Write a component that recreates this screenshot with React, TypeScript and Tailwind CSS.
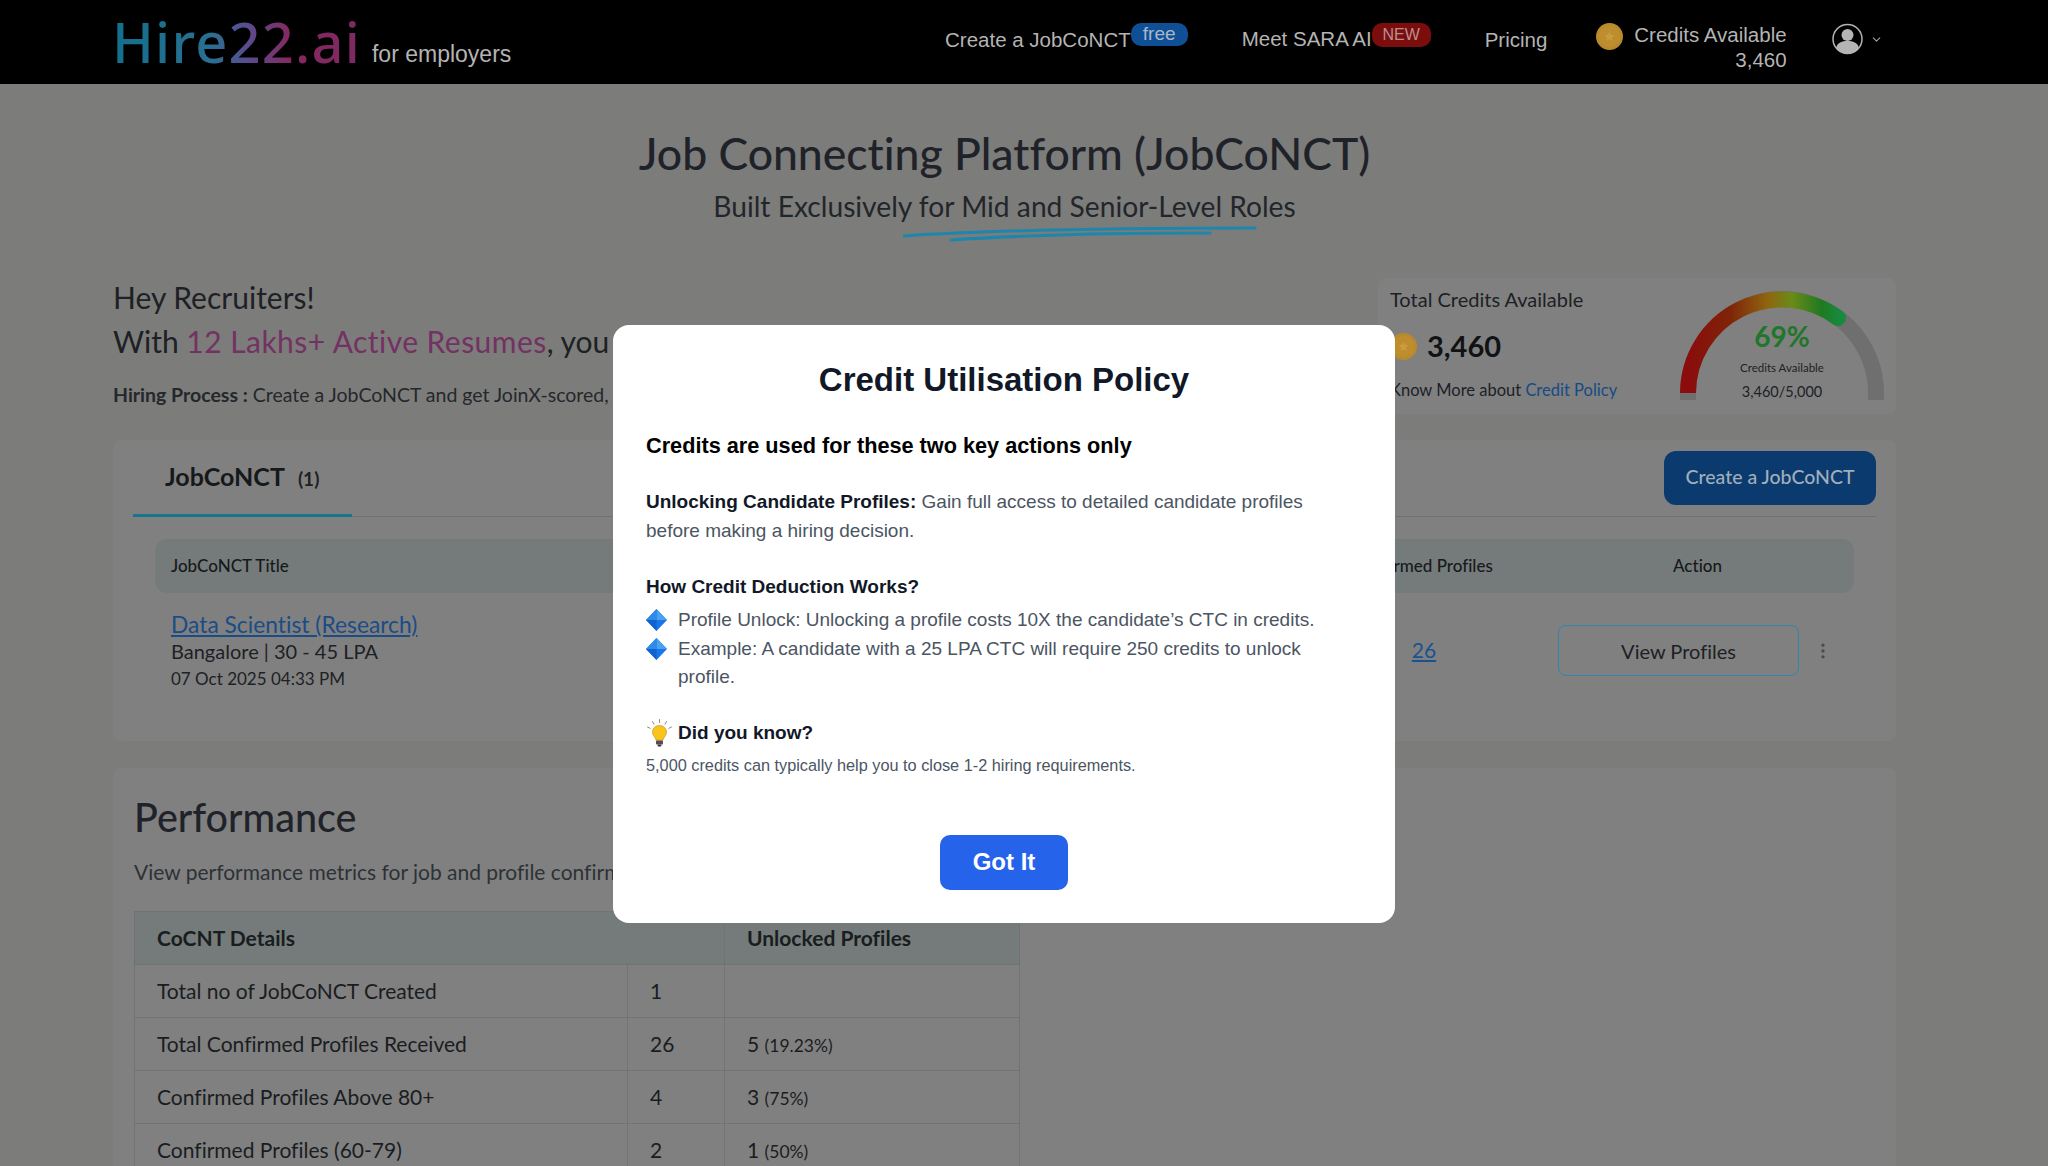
import { ChevronDown, EllipsisVertical } from 'lucide-react'

const perfRows = [
  { label: 'Total no of JobCoNCT Created', count: '1', unlocked: '', pct: '' },
  { label: 'Total Confirmed Profiles Received', count: '26', unlocked: '5', pct: '(19.23%)' },
  { label: 'Confirmed Profiles Above 80+', count: '4', unlocked: '3', pct: '(75%)' },
  { label: 'Confirmed Profiles (60-79)', count: '2', unlocked: '1', pct: '(50%)' },
]

function Coin({ size }: { size: number }) {
  return (
    <svg width={size} height={size} viewBox="0 0 24 24" className="shrink-0">
      <circle cx="12" cy="12" r="12" fill="#b98a2c" />
      <circle cx="12" cy="12" r="9.5" fill="#bd8d2e" />
      <path d="M12 7.500l1.300 2.900 3.200.4-2.400 2.100.7 3.200-2.800-1.600-2.800 1.600.7-3.200-2.400-2.100 3.200-.4z" fill="#c99c3e" />
    </svg>
  )
}

function Diamond() {
  return (
    <svg width="21" height="22" viewBox="0 0 21 22" className="shrink-0">
      <path d="M10.5 0 L21 11 L10.5 22 L0 11 Z" fill="#1976e8" />
      <path d="M10.5 0 L21 11 L10.5 11 Z" fill="#4aa3f0" />
      <path d="M10.5 0 L0 11 L10.5 11 Z" fill="#2f8ae8" />
      <path d="M10.5 22 L0 11 L10.5 11 Z" fill="#0f62d0" />
    </svg>
  )
}

function Bulb() {
  return (
    <svg width="27" height="28" viewBox="0 0 27 28" className="shrink-0">
      <g stroke="#8a8a8a" strokeWidth="1" strokeLinecap="round">
        <path d="M13.5 0.5v3M6.5 2.5l1.5 2.6M20.5 2.5l-1.500 2.600M1.500 8l2.600 1.300M25.500 8l-2.600 1.300" />
      </g>
      <path d="M13.500 6.500c-4 0-7 2.900-7 6.600 0 2.700 1.700 4.300 2.700 5.900.500.800.800 1.500.800 2.200h7c0-.700.300-1.400.800-2.200 1-1.600 2.700-3.200 2.700-5.900 0-3.700-3-6.600-7-6.600z" fill="#f8c51c" stroke="#b98a10" strokeWidth="0.6" />
      <rect x="10" y="21.500" width="7" height="4" rx="0.800" fill="#5a4a55" />
      <rect x="11.500" y="25.500" width="4" height="2" rx="1" fill="#3c3238" />
    </svg>
  )
}

function Gauge() {
  return (
    <svg width="204" height="109" viewBox="0 0 204 109" className="block">
      <defs>
        <linearGradient id="gaugeFill" gradientUnits="userSpaceOnUse" x1="8" y1="0" x2="160" y2="0">
          <stop offset="0" stopColor="#8a0c0c" />
          <stop offset="0.28" stopColor="#7f2408" />
          <stop offset="0.52" stopColor="#8f6410" />
          <stop offset="0.68" stopColor="#6c8a18" />
          <stop offset="0.88" stopColor="#1f7a20" />
          <stop offset="1" stopColor="#178a3e" />
        </linearGradient>
      </defs>
      <path d="M8 109 V102 A94 94 0 0 1 196 102 V109" fill="none" stroke="#6f6f6f" strokeWidth="16" />
      <path d="M8 101 V102 A94 94 0 0 1 158 27" fill="none" stroke="url(#gaugeFill)" strokeWidth="16" strokeLinecap="round" />
    </svg>
  )
}

export default function App() {
  return (
    <div className="h-screen w-screen overflow-hidden bg-[#7c7c7a] text-[#1d2125] font-['Lato','Noto_Sans',sans-serif] [font-variant-ligatures:none]">
      {/* top bar */}
      <header className="h-[84px] bg-black flex items-start pl-[112px] font-['Liberation_Sans',Arial,sans-serif] text-[#b4b4b4]">
        <div className="flex items-end mt-[11px] w-[400px]">
          <span className="font-['Noto_Sans',sans-serif] font-medium text-[56px] leading-[60px] tracking-[1.2px] bg-clip-text text-transparent bg-[linear-gradient(90deg,#12708c_0%,#2a6f92_40%,#5c4a8e_55%,#85285f_72%,#7c2a62_100%)]">Hire22.ai</span>
          <span className="text-[23px] leading-[26px] ml-[11px] mb-[4px] whitespace-nowrap">for employers</span>
        </div>
        <div className="flex items-start ml-[433px]">
          <span className="text-[20.500px] leading-[24px] mt-[28px]">Create a JobCoNCT</span>
          <span className="mt-[23px] w-[57px] h-[23px] rounded-[10px] bg-[#0f4f95] text-[#a9b8c8] text-[19px] leading-[21px] text-center">free</span>
          <span className="text-[20.500px] leading-[24px] mt-[27px] ml-[54px]">Meet SARA AI</span>
          <span className="mt-[23px] w-[59px] h-[24px] rounded-[10px] bg-[#7c0d0d] text-[#b89090] text-[16px] leading-[24px] text-center">NEW</span>
          <span className="text-[20.500px] leading-[24px] mt-[28px] ml-[54px]">Pricing</span>
          <div className="ml-[49px] mt-[23px]"><Coin size={27} /></div>
          <div className="ml-[11px] mt-[22px] text-right text-[20.500px] leading-[25px]">
            <div>Credits Available</div>
            <div>3,460</div>
          </div>
          <svg width="31" height="32" viewBox="0 0 31 32" className="ml-[45px] mt-[23px]">
            <circle cx="15.500" cy="16" r="14.500" fill="none" stroke="#b4b4b4" strokeWidth="1.500" />
            <circle cx="15.500" cy="12" r="6" fill="#b4b4b4" />
            <path d="M4 25c1.500-5.500 6-7 11.500-7s10 1.500 11.500 7c-2.500 3.500-6.500 6-11.500 6S6.500 28.500 4 25z" fill="#b4b4b4" />
          </svg>
          <ChevronDown size={13} className="ml-[7px] mt-[33px] text-[#a0a0a0]" />
        </div>
      </header>

      <main className="ml-[113px] w-[1783px]">
        {/* hero */}
        <h1 className="pt-[43px] text-center text-[44.500px] leading-[52px] font-medium text-[#1f2329]">Job Connecting Platform (JobCoNCT)</h1>
        <p className="mt-[9px] text-center text-[28.200px] leading-[36px] text-[#22262b]">Built Exclusively for Mid and Senior-Level Roles</p>
        <svg width="354" height="18" viewBox="0 0 354 18" className="block ml-[790px] mt-[1px]">
          <path d="M1 11C90 5 230 3 352 3" fill="none" stroke="#1d86ad" strokeWidth="3" strokeLinecap="round" />
          <path d="M48 15C120 10 220 8 307 8" fill="none" stroke="#1d86ad" strokeWidth="3" strokeLinecap="round" />
        </svg>

        {/* intro + credits */}
        <div className="flex justify-between items-start mt-[35px]">
          <div>
            <p className="text-[30px] leading-[44px] mt-[-3px]">Hey Recruiters!</p>
            <p className="text-[30px] leading-[44px] whitespace-nowrap">With <span className="text-[#743163] tracking-[0.45px]">12 Lakhs+ Active Resumes</span>, you</p>
            <p className="text-[19.500px] leading-[26px] mt-[19px] text-[#24282c] whitespace-nowrap"><span className="font-bold">Hiring Process :</span> Create a JobCoNCT and get JoinX-scored,</p>
          </div>
          <div className="w-[518px] h-[136px] bg-[#808080] rounded-[8px] flex justify-between pl-[12px] pr-[12px] overflow-hidden">
            <div className="pt-[9px]">
              <p className="text-[20px] leading-[24px]">Total Credits Available</p>
              <div className="flex items-center gap-[10px] mt-[17px]">
                <Coin size={27} />
                <span className="text-[29px] leading-[36px] font-bold text-[#101214]">3,460</span>
              </div>
              <p className="text-[16.500px] leading-[22px] mt-[15px] whitespace-nowrap">Know More about <span className="text-[#174a84]">Credit Policy</span></p>
            </div>
            <div className="relative w-[204px] h-[109px] mt-[13px]">
              <Gauge />
              <div className="absolute inset-x-0 top-[28px] text-center">
                <p className="text-[28px] leading-[34px] font-bold text-[#20772a]">69%</p>
                <p className="text-[11.500px] leading-[14px] mt-[8px]">Credits Available</p>
                <p className="text-[14.500px] leading-[18px] mt-[8px]">3,460/5,000</p>
              </div>
            </div>
          </div>
        </div>

        {/* JobCoNCT list */}
        <section className="mt-[26px] h-[301px] bg-[#808080] rounded-[8px] px-[20px]">
          <div className="h-[77px] border-b border-[#6e7072] flex justify-between items-start">
            <div className="w-[219px] h-[77px] border-b-[3px] border-[#17768c] pl-[32px] pt-[20px] flex items-baseline">
              <span className="text-[25px] leading-[32px] font-bold text-[#16181a]">JobCoNCT</span>
              <span className="text-[19px] font-bold ml-[13px]">(1)</span>
            </div>
            <button className="mt-[11px] w-[212px] h-[54px] pb-[2px] rounded-[12px] bg-[#0b3a6e] text-[#a0aebb] text-[19.500px] font-medium">Create a JobCoNCT</button>
          </div>
          <div className="mx-[22px] mt-[22px] h-[54px] rounded-[12px] bg-[#747b7a] grid grid-cols-[1152px_190px_1fr] items-center pl-[16px] text-[17px] font-medium text-[#17191b]">
            <span>JobCoNCT Title</span>
            <span className="text-center whitespace-nowrap pl-[10px]">Confirmed Profiles</span>
            <span className="pl-[160px]">Action</span>
          </div>
          <div className="mx-[22px] grid grid-cols-[1152px_190px_1fr] pl-[16px] pt-[17px]">
            <div>
              <a className="block text-[22.800px] leading-[28px] text-[#1a4c86] underline">Data Scientist (Research)</a>
              <p className="text-[20px] leading-[27px]">Bangalore | 30 - 45 LPA</p>
              <p className="text-[17px] leading-[26px] mt-[1px]">07 Oct 2025 04:33 PM</p>
            </div>
            <a className="text-center pl-[12px] pt-[26px] text-[21px] leading-[28px] text-[#1a528f] underline">26</a>
            <div className="flex items-start pl-[45px] pt-[15px]">
              <button className="w-[241px] h-[51px] rounded-[8px] border border-[#2f86ad] text-[20px]">View Profiles</button>
              <EllipsisVertical size={20} className="ml-[14px] mt-[16px] text-[#4a4a4a]" />
            </div>
          </div>
        </section>

        {/* performance */}
        <section className="mt-[27px] bg-[#808080] rounded-t-[8px] pl-[21px] pt-[25px] pb-[40px]">
          <h2 className="text-[39.500px] leading-[48px] font-medium text-[#1f2329]">Performance</h2>
          <p className="text-[21px] leading-[28px] mt-[17px] text-[#2d3236] whitespace-nowrap">View performance metrics for job and profile confirmations</p>
          <table className="mt-[25px] w-[885px] table-fixed border-collapse text-[21px] text-[#1a1d20]">
            <colgroup>
              <col className="w-[493px]" />
              <col className="w-[97px]" />
              <col className="w-[295px]" />
            </colgroup>
            <thead>
              <tr className="h-[53px] bg-[#747b7a]">
                <th colSpan={2} className="border border-[#6f7473] pl-[22px] text-left font-bold">CoCNT Details</th>
                <th className="border border-[#6f7473] pl-[22px] text-left font-bold">Unlocked Profiles</th>
              </tr>
            </thead>
            <tbody>
              {perfRows.map(r => (
                <tr key={r.label} className="h-[53px]">
                  <td className="border border-[#737373] pl-[22px]">{r.label}</td>
                  <td className="border border-[#737373] pl-[22px]">{r.count}</td>
                  <td className="border border-[#737373] pl-[22px]">
                    {r.unlocked} {r.pct && <span className="text-[17.500px]">{r.pct}</span>}
                  </td>
                </tr>
              ))}
            </tbody>
          </table>
        </section>
      </main>

      {/* policy dialog */}
      <div className="fixed inset-0 flex items-center justify-center pr-[40px] pt-[82px] font-['Liberation_Sans',Arial,sans-serif]">
        <div className="w-[782px] h-[598px] bg-white rounded-[16px] px-[33px] pt-[33px]">
          <h3 className="text-center text-[33px] leading-[44px] font-bold text-[#111827]">Credit Utilisation Policy</h3>
          <p className="mt-[29px] text-[21.700px] leading-[30px] font-bold text-black">Credits are used for these two key actions only</p>
          <p className="mt-[27px] max-w-[680px] text-[19px] leading-[28.500px] text-[#4b5563]">
            <span className="font-bold text-[#111827]">Unlocking Candidate Profiles:</span> Gain full access to detailed candidate profiles before making a hiring decision.
          </p>
          <p className="mt-[28px] text-[19px] leading-[28px] font-bold text-[#111827]">How Credit Deduction Works?</p>
          <div className="mt-[5px] flex gap-[11px] text-[19px] leading-[28.500px] text-[#4b5563]">
            <div className="pt-[3px]"><Diamond /></div>
            <p>Profile Unlock: Unlocking a profile costs 10X the candidate’s CTC in credits.</p>
          </div>
          <div className="flex gap-[11px] text-[19px] leading-[28.500px] text-[#4b5563]">
            <div className="pt-[3px]"><Diamond /></div>
            <p>Example: A candidate with a 25 LPA CTC will require 250 credits to unlock profile.</p>
          </div>
          <div className="mt-[27px] flex items-center gap-[5px]">
            <Bulb />
            <p className="text-[19px] leading-[28px] font-bold text-[#111827]">Did you know?</p>
          </div>
          <p className="mt-[6px] text-[16.300px] leading-[24px] text-[#4b5563]">5,000 credits can typically help you to close 1-2 hiring requirements.</p>
          <div className="flex justify-center mt-[58px]">
            <button className="w-[128px] h-[55px] rounded-[10px] bg-[#2563eb] text-white text-[24px] font-bold">Got It</button>
          </div>
        </div>
      </div>
    </div>
  )
}
